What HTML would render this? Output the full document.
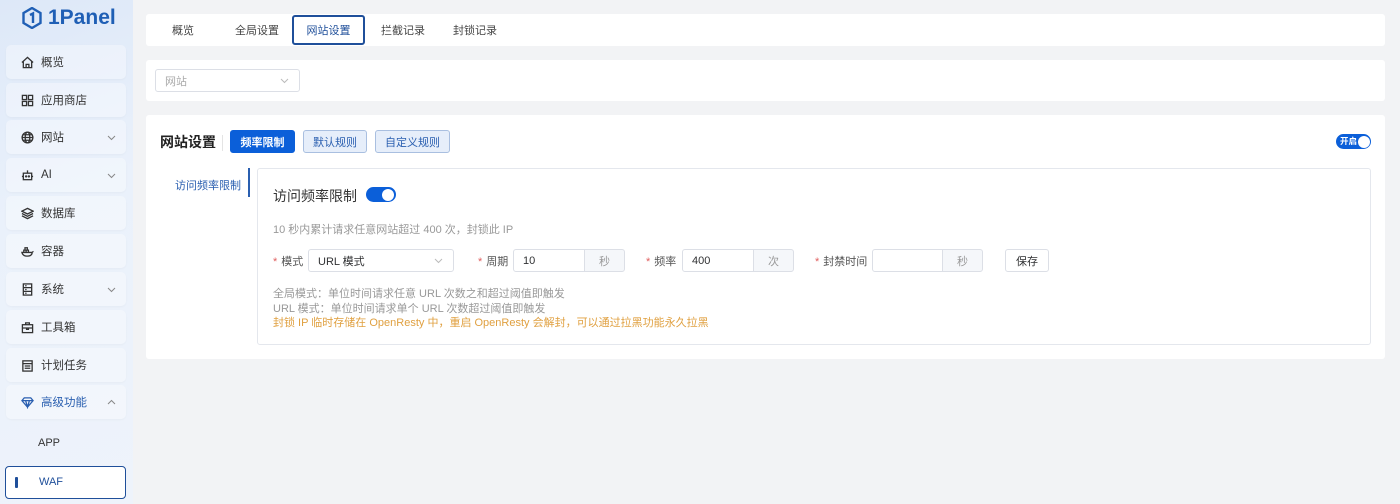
<!DOCTYPE html>
<html><head><meta charset="utf-8"><style>
*{box-sizing:border-box;margin:0;padding:0}
body{width:1400px;height:504px;overflow:hidden;background:#f2f3f5;font-family:"Liberation Sans","Noto Sans CJK SC",sans-serif;font-size:12px;color:#303133;position:relative}
.side{position:absolute;left:0;top:0;width:133px;height:504px;background:linear-gradient(160deg,#dde8f8 0%,#eaf1fb 40%,#eef3fb 100%)}
.logo{position:absolute;left:22px;top:6px;font-size:21px;font-weight:bold;color:#1f5fb5;display:flex;align-items:center;gap:6px}
.mi{position:absolute;left:6px;width:120px;height:34px;background:rgba(255,255,255,.35);border-radius:5px;display:flex;align-items:center;padding-left:15px;font-size:11.5px;color:#333;box-shadow:0 1px 2px rgba(0,0,0,.03)}
.mi svg{width:13px;height:13px;margin-right:7px;stroke:#333;fill:none;stroke-width:1.4}
.mi svg.ar{position:absolute;right:10px;width:9px;height:9px;margin:0;stroke:#888;stroke-width:1}
.card{position:absolute;left:146px;width:1239px;background:#fff;border-radius:3px}
.tab{position:absolute;top:0;height:31px;display:flex;align-items:center;font-size:11px;color:#444}
.btn{position:absolute;height:23px;display:flex;align-items:center;justify-content:center;border-radius:3px;font-size:11px;border:1px solid #a9bfe0;background:#e6eefa;color:#2a5fb0}
.in{position:absolute;height:23px;border:1px solid #dcdfe6;border-radius:3px;display:flex;align-items:center;padding-left:9px;font-size:11px;background:#fff}
.in svg.ch{position:absolute;right:10px;top:8px;width:9px;height:6px;stroke:#bbb;fill:none;stroke-width:1}
.suf{position:absolute;top:-1px;height:23px;background:#f5f7fa;border:1px solid #dcdfe6;border-radius:0 3px 3px 0;color:#999;display:flex;align-items:center;justify-content:center}
.lbl{position:absolute;font-size:11px;color:#555;top:253px}
.lbl b{color:#e06060;font-weight:normal;margin-right:4px}
.sw{position:absolute;border-radius:10px;background:#0b5fd9}
.sw i{position:absolute;background:#fff;border-radius:50%}
</style></head><body>
<div class="side">
 <div class="logo"><svg width="20" height="22" viewBox="0 0 20 22"><path d="M10 1 L18.5 6 V16 L10 21 L1.5 16 V6 Z" fill="none" stroke="#1f5fb5" stroke-width="2.4"/><path d="M8 8 L11 6.5 V16" fill="none" stroke="#1f5fb5" stroke-width="2.4"/></svg>1Panel</div>
 <div class="mi" style="top:45px"><svg viewBox="0 0 14 14"><path d="M1 7 L7 1.5 L13 7 M2.5 6 V12.5 H11.5 V6 M5.5 12.5 V9 H8.5 V12.5"/></svg>概览</div>
 <div class="mi" style="top:83px"><svg viewBox="0 0 14 14"><rect x="1.5" y="1.5" width="4.5" height="4.5"/><rect x="8" y="1.5" width="4.5" height="4.5"/><rect x="1.5" y="8" width="4.5" height="4.5"/><rect x="8" y="8" width="4.5" height="4.5"/></svg>应用商店</div>
 <div class="mi" style="top:120px"><svg viewBox="0 0 14 14"><circle cx="7" cy="7" r="5.8"/><ellipse cx="7" cy="7" rx="2.5" ry="5.8"/><path d="M1.2 7 H12.8 M2 4 H12 M2 10 H12"/></svg>网站<svg class="ar" viewBox="0 0 9 9"><path d="M1 3 L4.5 6.5 L8 3"/></svg></div>
 <div class="mi" style="top:158px"><svg viewBox="0 0 14 14"><rect x="2.5" y="4.5" width="9" height="7"/><path d="M7 1.5 V4.5 M1 8 H2.5 M11.5 8 H13"/><circle cx="5.5" cy="8" r=".6"/><circle cx="8.5" cy="8" r=".6"/></svg>AI<svg class="ar" viewBox="0 0 9 9"><path d="M1 3 L4.5 6.5 L8 3"/></svg></div>
 <div class="mi" style="top:196px"><svg viewBox="0 0 14 14"><path d="M7 1.5 L13 4.5 L7 7.5 L1 4.5 Z M1 7 L7 10 L13 7 M1 9.5 L7 12.5 L13 9.5"/></svg>数据库</div>
 <div class="mi" style="top:234px"><svg viewBox="0 0 14 14"><path d="M1 8 H12 Q12 12 6.5 12 Q2 12 1 8 Z M3 8 V5.5 H5.5 V8 M5.5 8 V5.5 H8 V8 M4.3 5.5 V3 H6.8 V5.5 M12 8 Q13 7 13.5 7"/></svg>容器</div>
 <div class="mi" style="top:272px"><svg viewBox="0 0 14 14"><rect x="2.5" y="1" width="9" height="12"/><path d="M2.5 5 H11.5 M2.5 9 H11.5 M4.5 3 H6 M4.5 7 H6 M4.5 11 H6"/></svg>系统<svg class="ar" viewBox="0 0 9 9"><path d="M1 3 L4.5 6.5 L8 3"/></svg></div>
 <div class="mi" style="top:310px"><svg viewBox="0 0 14 14"><rect x="1.5" y="4" width="11" height="8.5"/><path d="M5 4 V2 H9 V4 M1.5 7.5 H12.5 M6 7.5 V9 H8 V7.5"/></svg>工具箱</div>
 <div class="mi" style="top:348px"><svg viewBox="0 0 14 14"><rect x="2" y="2" width="10" height="11"/><path d="M2 5 H12 M4 7.5 H10 M4 10 H10"/></svg>计划任务</div>
 <div class="mi" style="top:385px;color:#2a5fb0"><svg viewBox="0 0 14 14" style="stroke:#2a5fb0"><path d="M1 5 L3.5 2 H10.5 L13 5 L7 12 Z M1 5 H13 M5 5 L7 12 L9 5"/></svg>高级功能<svg class="ar" viewBox="0 0 9 9"><path d="M1 6 L4.5 2.5 L8 6"/></svg></div>
 <div style="position:absolute;left:38px;top:437px;font-size:11px;color:#333">APP</div>
 <div style="position:absolute;left:5px;top:466px;width:121px;height:33px;border:1.5px solid #1f4f9a;border-radius:4px;background:#fff"><div style="position:absolute;left:9px;top:10px;width:3px;height:11px;background:#1f4f9a;border-radius:1px"></div><span style="position:absolute;left:33px;top:9px;font-size:11px;color:#1f4f9a">WAF</span></div>
</div>

<div class="card" style="top:14px;height:32px">
 <div class="tab" style="left:26px">概览</div>
 <div class="tab" style="left:89px">全局设置</div>
 <div class="tab" style="left:146px;top:1px;width:73px;height:30px;border:2px solid #1f4f9a;border-radius:3px;justify-content:center;color:#1f4f9a">网站设置</div>
 <div class="tab" style="left:235px">拦截记录</div>
 <div class="tab" style="left:307px">封锁记录</div>
</div>

<div class="card" style="top:60px;height:41px">
 <div class="in" style="left:9px;top:9px;width:145px;color:#aaa">网站<svg class="ch" viewBox="0 0 9 6"><path d="M1 1 L4.5 4.5 L8 1"/></svg></div>
</div>

<div class="card" style="top:115px;height:244px">
 <div style="position:absolute;left:14px;top:17px;font-size:14px;font-weight:bold;color:#222">网站设置</div>
 <div style="position:absolute;left:76px;top:20px;width:1px;height:16px;background:#e4e4e4"></div>
 <div class="btn" style="left:84px;top:15px;width:65px;background:#0b5fd9;border-color:#0b5fd9;color:#fff;font-weight:bold">频率限制</div>
 <div class="btn" style="left:157px;top:15px;width:64px">默认规则</div>
 <div class="btn" style="left:229px;top:15px;width:75px">自定义规则</div>
 <div class="sw" style="left:1190px;top:19px;width:35px;height:15px"><span style="position:absolute;left:4px;top:2px;font-size:8.5px;line-height:11px;color:#fff;font-weight:bold">开启</span><i style="left:22px;top:1.5px;width:12px;height:12px"></i></div>
 <div style="position:absolute;left:29px;top:62px;font-size:11px;color:#2a5fb0">访问频率限制</div>
 <div style="position:absolute;left:102px;top:53px;width:2px;height:29px;background:#2a5fb0"></div>
 <div style="position:absolute;left:111px;top:53px;width:1114px;height:177px;border:1px solid #e4e7ed;border-radius:3px"></div>
</div>

<div style="position:absolute;left:273px;top:186px;font-size:14px;color:#333">访问频率限制</div>
<div class="sw" style="left:366px;top:187px;width:30px;height:15px"><i style="left:16px;top:1.5px;width:12px;height:12px"></i></div>
<div style="position:absolute;left:273px;top:221px;font-size:11px;color:#999">10 秒内累计请求任意网站超过 400 次，封锁此 IP</div>

<div class="lbl" style="left:273px"><b>*</b>模式</div>
<div class="in" style="left:308px;top:249px;width:146px">URL 模式<svg class="ch" viewBox="0 0 9 6"><path d="M1 1 L4.5 4.5 L8 1"/></svg></div>
<div class="lbl" style="left:478px"><b>*</b>周期</div>
<div class="in" style="left:513px;top:249px;width:111px">10<span class="suf" style="left:70px;width:41px">秒</span></div>
<div class="lbl" style="left:646px"><b>*</b>频率</div>
<div class="in" style="left:682px;top:249px;width:111px">400<span class="suf" style="left:70px;width:41px">次</span></div>
<div class="lbl" style="left:815px"><b>*</b>封禁时间</div>
<div class="in" style="left:872px;top:249px;width:110px"><span class="suf" style="left:69px;width:41px">秒</span></div>
<div class="in" style="left:1005px;top:249px;width:44px;padding-left:0;justify-content:center">保存</div>

<div style="position:absolute;left:273px;top:287px;font-size:11px;line-height:14.5px;color:#999">全局模式：单位时间请求任意 URL 次数之和超过阈值即触发<br>URL 模式：单位时间请求单个 URL 次数超过阈值即触发<br><span style="color:#e0a040">封锁 IP 临时存储在 OpenResty 中，重启 OpenResty 会解封，可以通过拉黑功能永久拉黑</span></div>
</body></html>
